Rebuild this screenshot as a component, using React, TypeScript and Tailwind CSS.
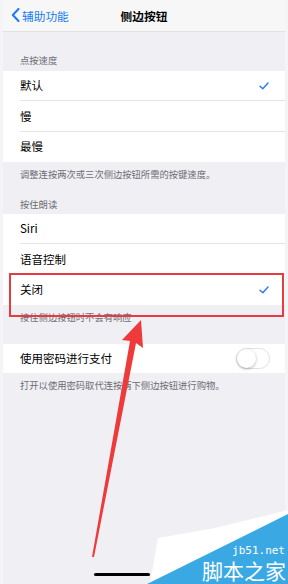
import React from "react";

const font = { fontFamily: '"Noto Sans CJK SC", "Noto Sans", sans-serif' };

const Check = () => (
  <svg width="10" height="8" viewBox="0 0 10 8" className="mr-[16px]">
    <path d="M1 4.2 L3.8 6.8 L9 1" fill="none" stroke="#2f7cf6" strokeWidth="1.5" strokeLinecap="round" strokeLinejoin="round" />
  </svg>
);

const Row = ({ label, checked, h, last }: { label: string; checked?: boolean; h: string; last?: boolean }) => (
  <div className={`flex items-center justify-between pl-[17px] ${h} relative`}>
    <span className="text-[11.5px] text-black">{label}</span>
    {checked && <Check />}
    {!last && <div className="absolute left-[17px] right-0 bottom-0 h-px bg-[#e3e3e6]" />}
  </div>
);

const Note = ({ children, cls }: { children: React.ReactNode; cls: string }) => (
  <div className={`px-[17px] text-[9.3px] leading-[12px] text-[#6d6d72] ${cls}`}>{children}</div>
);

export default function App() {
  return (
    <div className="relative w-[288px] h-[584px] overflow-hidden bg-[#f4f4f6] px-[3px]" style={font}>
      <div className="h-full bg-[#efeff4] flex flex-col">
        {/* nav */}
        <div className="h-[32px] bg-[#f7f7f8] border-b border-[#e2e2e5] flex items-center relative shrink-0">
          <div className="flex items-center pl-[8px] text-[#1a7cf5]">
            <svg width="9" height="14" viewBox="0 0 9 14">
              <path d="M7.5 1 L1.8 7 L7.5 13" fill="none" stroke="#1a7cf5" strokeWidth="2" strokeLinecap="round" strokeLinejoin="round" />
            </svg>
            <span className="ml-[2px] text-[11.7px]">辅助功能</span>
          </div>
          <div className="absolute inset-0 flex items-center justify-center text-[11.7px] font-semibold text-black pointer-events-none">
            侧边按钮
          </div>
        </div>

        <Note cls="pt-[22px] pb-[5px]">点按速度</Note>
        <div className="bg-white">
          <Row label="默认" checked h="h-[30px]" />
          <Row label="慢" h="h-[31px]" />
          <Row label="最慢" h="h-[30px]" last />
        </div>
        <Note cls="pt-[6px]">调整连按两次或三次侧边按钮所需的按键速度。</Note>

        <Note cls="pt-[18px] pb-[4px]">按住朗读</Note>
        <div className="bg-white">
          <Row label="Siri" h="h-[30px]" />
          <Row label="语音控制" h="h-[31px]" />
          <Row label="关闭" checked h="h-[30px]" last />
        </div>
        <Note cls="pt-[6px]">按住侧边按钮时不会有响应</Note>

        <div className="mt-[21px] bg-white h-[29px] flex items-center justify-between pl-[17px] pr-[15px]">
          <span className="text-[11.5px] text-black">使用密码进行支付</span>
          <div className="w-[34px] h-[21px] rounded-full border border-[#e0e0e3] bg-white relative">
            <div className="absolute left-0 top-0 w-[19px] h-[19px] rounded-full bg-white shadow-[0_1px_3px_rgba(0,0,0,0.3)]" />
          </div>
        </div>
        <Note cls="pt-[6px]">打开以使用密码取代连按两下侧边按钮进行购物。</Note>
      </div>

      {/* home indicator */}
      <div className="absolute left-[94px] top-[573px] w-[56px] h-[3px] rounded-full bg-black" />

      {/* red highlight */}
      <div className="absolute left-[9px] top-[273px] w-[275px] h-[44px] border-[2.5px] border-[#e63b3f]" />

      {/* red arrow */}
      <svg className="absolute left-0 top-0" width="288" height="584" viewBox="0 0 288 584">
        <polygon points="92,557 94,557 136,343 143,348 141,320 122,340 130,341" fill="#ee3a3a" />
      </svg>

      {/* watermark */}
      <svg className="absolute left-0 top-0" width="288" height="584" viewBox="0 0 288 584">
        <polygon points="150,584 158,538 215,528 288,510 288,520 160,584" fill="#ffffff" />
        <polygon points="147,584 288,514 288,584" fill="#3aa9e3" />
      </svg>
      <div className="absolute right-[3px] top-[545px] text-[11px] leading-[11px] text-white" style={{ fontFamily: '"DejaVu Sans Mono", monospace' }}>
        jb51.net
      </div>
      <div className="absolute right-[2px] top-[559px] text-[21px] leading-[23px] text-white" style={font}>
        脚本之家
      </div>
    </div>
  );
}
